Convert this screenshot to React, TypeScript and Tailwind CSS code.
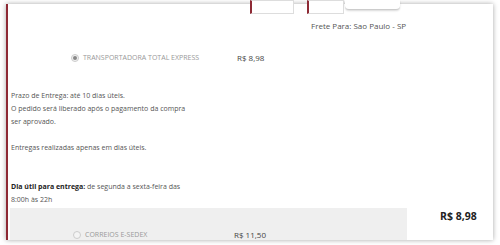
export default function App() {
  return (
    <div className="w-[500px] h-[245px] bg-white overflow-hidden font-['Open_Sans',sans-serif] text-[#555]">
      <div className="ml-[6px] mt-[4px] w-[487px] h-[236px] bg-white border-l-2 border-[#8e2a35] shadow-[0_0_5px_rgba(0,0,0,0.35)] flex flex-col">
        {/* tabs row */}
        <div className="-mt-[4px] h-[14px] flex pl-[242px]">
          <div className="w-[44px] h-[14px] border border-[#ddd] border-l-2 border-l-[#8e2a35] bg-white" />
          <div className="ml-[13px] w-[37px] h-[14px] border border-[#ddd] border-l-2 border-l-[#8e2a35] bg-white" />
          <div className="ml-[1px] w-[55px] h-[10px] border-b border-[#ccc] rounded-b shadow-[0_1px_2px_rgba(0,0,0,0.15)] bg-white" />
        </div>

        <div className="pl-[303px] mt-[7px] text-[8px] leading-[10px] text-[#555]">Frete Para: Sao Paulo - SP</div>

        {/* option 1 */}
        <div className="mt-[21px] flex items-center h-[12px] shrink-0">
          <div className="ml-[63px] w-[8px] h-[8px] rounded-full border border-[#ccc] bg-[#f2f2f2] flex items-center justify-center">
            <div className="w-[4px] h-[4px] rounded-full bg-[#888]" />
          </div>
          <span className="ml-[4px] w-[154px] text-[7px] uppercase text-[#999]">Transportadora Total Express</span>
          <span className="text-[8px] text-[#444]">R$ 8,98</span>
        </div>

        <div className="pl-[3px] mt-[25px] text-[7px] leading-[13px] text-[#555] shrink-0">
          <p>Prazo de Entrega: até 10 dias úteis.</p>
          <p>O pedido será liberado após o pagamento da compra</p>
          <p>ser aprovado.</p>
          <p>&nbsp;</p>
          <p>Entregas realizadas apenas em dias úteis.</p>
          <p>&nbsp;</p>
          <p>&nbsp;</p>
          <p>
            <b className="text-[#222]">Dia útil para entrega:</b> de segunda a sexta-feira das
          </p>
          <p>8:00h às 22h</p>
        </div>

        {/* option 2 + total */}
        <div className="mt-auto flex items-end shrink-0">
          <div className="ml-[2px] w-[397px] h-[32px] bg-[#efefef] flex items-end">
            <div className="ml-[63px] w-[8px] h-[8px] rounded-full border border-[#ccc] bg-[#f4f4f4] mb-[1px]" />
            <span className="ml-[4px] w-[149px] text-[7px] leading-[10px] uppercase text-[#999]">Correios e-Sedex</span>
            <span className="text-[8px] leading-[10px] text-[#444]">R$ 11,50</span>
          </div>
          <div className="ml-[33px] mb-[17px] text-[10.5px] leading-[14px] font-bold text-[#222]">R$ 8,98</div>
        </div>
      </div>
    </div>
  )
}
